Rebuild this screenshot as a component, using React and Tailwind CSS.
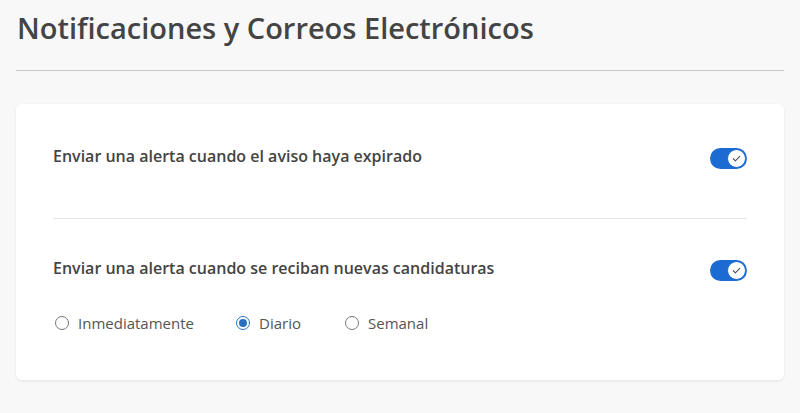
import { useState } from 'react'

function Toggle({ on, onChange }) {
  return (
    <button
      type="button"
      onClick={() => onChange(!on)}
      className={`relative flex items-center mt-[3px] w-[37px] h-[21px] rounded-full shrink-0 ${on ? 'bg-[#1b6bd2]' : 'bg-[#c4c4c4]'}`}
      aria-pressed={on}
    >
      <span
        className={`absolute top-[1px] flex items-center justify-center w-[19px] h-[19px] rounded-full bg-white border border-[#1b6bd2] ${on ? 'left-[17px]' : 'left-[1px]'}`}
      >
        {on && (
          <svg className="w-[11px] h-[11px] text-[#555]" fill="none" stroke="currentColor" viewBox="0 0 24 24">
            <path strokeLinecap="round" strokeLinejoin="round" strokeWidth={2.5} d="M5 12.5l4.5 4.5L19 7.5" />
          </svg>
        )}
      </span>
    </button>
  )
}

function Radio({ label, checked, onSelect }) {
  return (
    <label className="flex items-center gap-[9px] cursor-pointer leading-[22px]" onClick={onSelect}>
      <span className={`flex items-center justify-center w-[14px] h-[14px] rounded-full border ${checked ? 'border-[#2a6fbf]' : 'border-[#777]'}`}>
        {checked && <span className="w-[8px] h-[8px] rounded-full bg-[#2a6fbf]" />}
      </span>
      <span className="text-[15px] text-[#555]">{label}</span>
    </label>
  )
}

export default function App() {
  const [expired, setExpired] = useState(true)
  const [applies, setApplies] = useState(true)
  const [freq, setFreq] = useState('diario')

  return (
    <div className="min-h-[413px] bg-[#f8f8f8] px-4 pt-[8px] font-['Open_Sans',sans-serif]">
      <h1 className="text-[29px] font-semibold text-[#444] leading-[40px] pl-[1px]">Notificaciones y Correos Electrónicos</h1>
      <div className="mt-[22px] border-t border-[#c9c9c9]" />

      <div className="mt-[33px] bg-white rounded-md shadow-[0_1px_3px_rgba(0,0,0,0.09)] px-[37px]">
        {/* Expired notice */}
        <div className="flex items-start justify-between pt-[41px] pb-[49px] border-b border-[#e6e6e6]">
          <span className="text-[16px] leading-[22px] font-semibold text-[#444]">Enviar una alerta cuando el aviso haya expirado</span>
          <Toggle on={expired} onChange={setExpired} />
        </div>

        {/* New applications */}
        <div className="pt-[38px] pb-[46px]">
          <div className="flex items-start justify-between">
            <span className="text-[16px] leading-[22px] font-semibold text-[#444]">Enviar una alerta cuando se reciban nuevas candidaturas</span>
            <Toggle on={applies} onChange={setApplies} />
          </div>
          <div className="flex items-center mt-[31px] pl-[2px]">
            <div className="w-[181px]"><Radio label="Inmediatamente" checked={freq === 'inmediato'} onSelect={() => setFreq('inmediato')} /></div>
            <div className="w-[109px]"><Radio label="Diario" checked={freq === 'diario'} onSelect={() => setFreq('diario')} /></div>
            <Radio label="Semanal" checked={freq === 'semanal'} onSelect={() => setFreq('semanal')} />
          </div>
        </div>
      </div>
    </div>
  )
}
